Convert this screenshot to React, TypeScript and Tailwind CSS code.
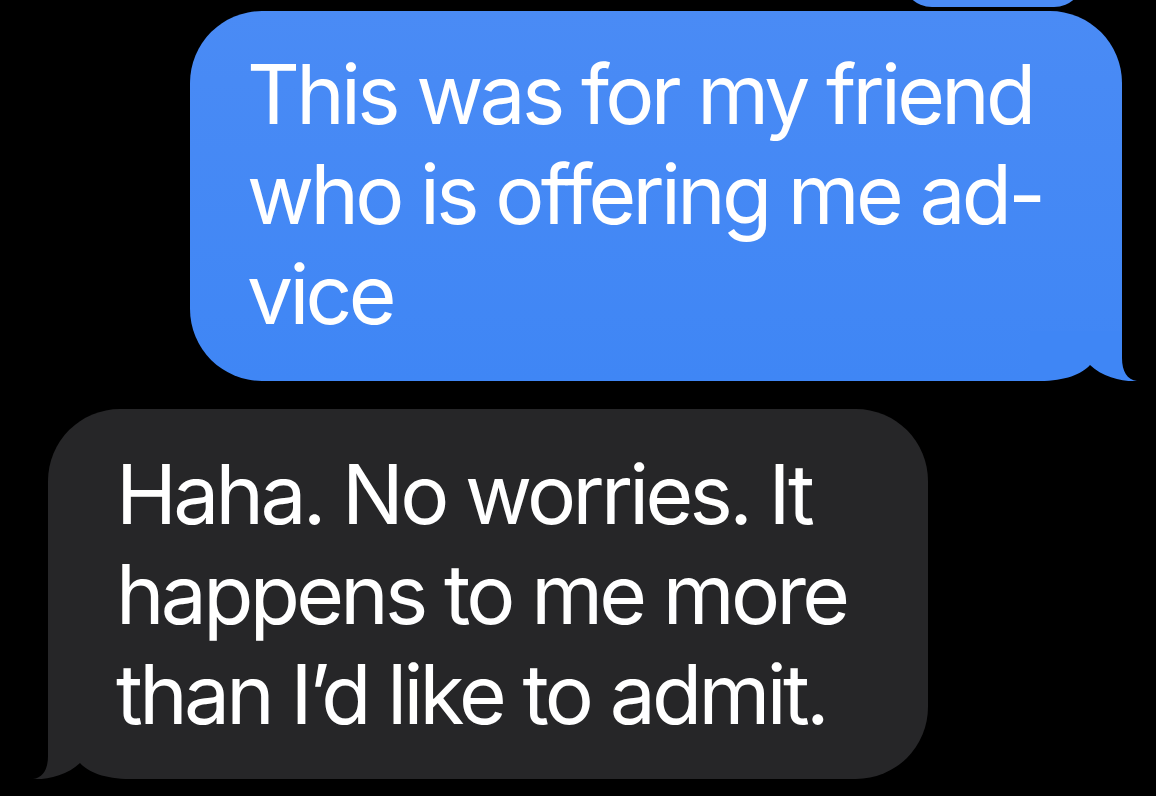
import React from 'react';

const font = { fontFamily: 'Inter, "Noto Sans", sans-serif' };

// iOS-style bubble tail, drawn for the right side; flipped for the left
const Tail: React.FC<{ color: string; side: 'left' | 'right' }> = ({ color, side }) => (
  <svg
    width="110"
    height="51"
    viewBox="0 0 110 51"
    className={
      side === 'right'
        ? 'absolute bottom-[-1px] right-[-18px]'
        : 'absolute bottom-[-1px] left-[-18px] scale-x-[-1]'
    }
  >
    <rect x="0" y="0" width="110" height="51" fill="#000" />
    <path
      d="M0 0 H92 V27 C92 40 97 49 107 50 C94 51 72 46 60 34 C52 43 35 50 10 50 H0 Z"
      fill={color}
    />
  </svg>
);

const App: React.FC = () => {
  const blueLines = ['This was for my friend', 'who is offering me ad-', 'vice'];
  const grayLines = ['Haha. No worries. It', 'happens to me more', 'than I’d like to admit.'];

  return (
    <div className="w-full h-[796px] bg-black overflow-hidden flex flex-col text-white" style={font}>
      {/* tail end of the previous sent message */}
      <div className="self-end mr-[72px] -mt-[53px] h-[60px] w-[182px] rounded-full bg-[#4a8bf5]" />

      <div className="relative self-end mr-[34px] mt-[4px] w-[932px] h-[370px] rounded-[72px] rounded-br-none bg-gradient-to-b from-[#4a8bf5] to-[#3f86f5] pl-[57px] pt-[34px]">
        {blueLines.map((line) => (
          <div key={line} className="text-[82px] leading-[100px] tracking-[-0.045em] whitespace-nowrap">
            {line}
          </div>
        ))}
        <Tail color="#3f86f5" side="right" />
      </div>

      <div className="relative self-start ml-[48px] mt-[28px] w-[880px] h-[370px] rounded-[72px] rounded-bl-none bg-[#262628] pl-[68px] pt-[36px]">
        {grayLines.map((line) => (
          <div key={line} className="text-[82px] leading-[100px] tracking-[-0.045em] whitespace-nowrap">
            {line}
          </div>
        ))}
        <Tail color="#262628" side="left" />
      </div>
    </div>
  );
};

export default App;
